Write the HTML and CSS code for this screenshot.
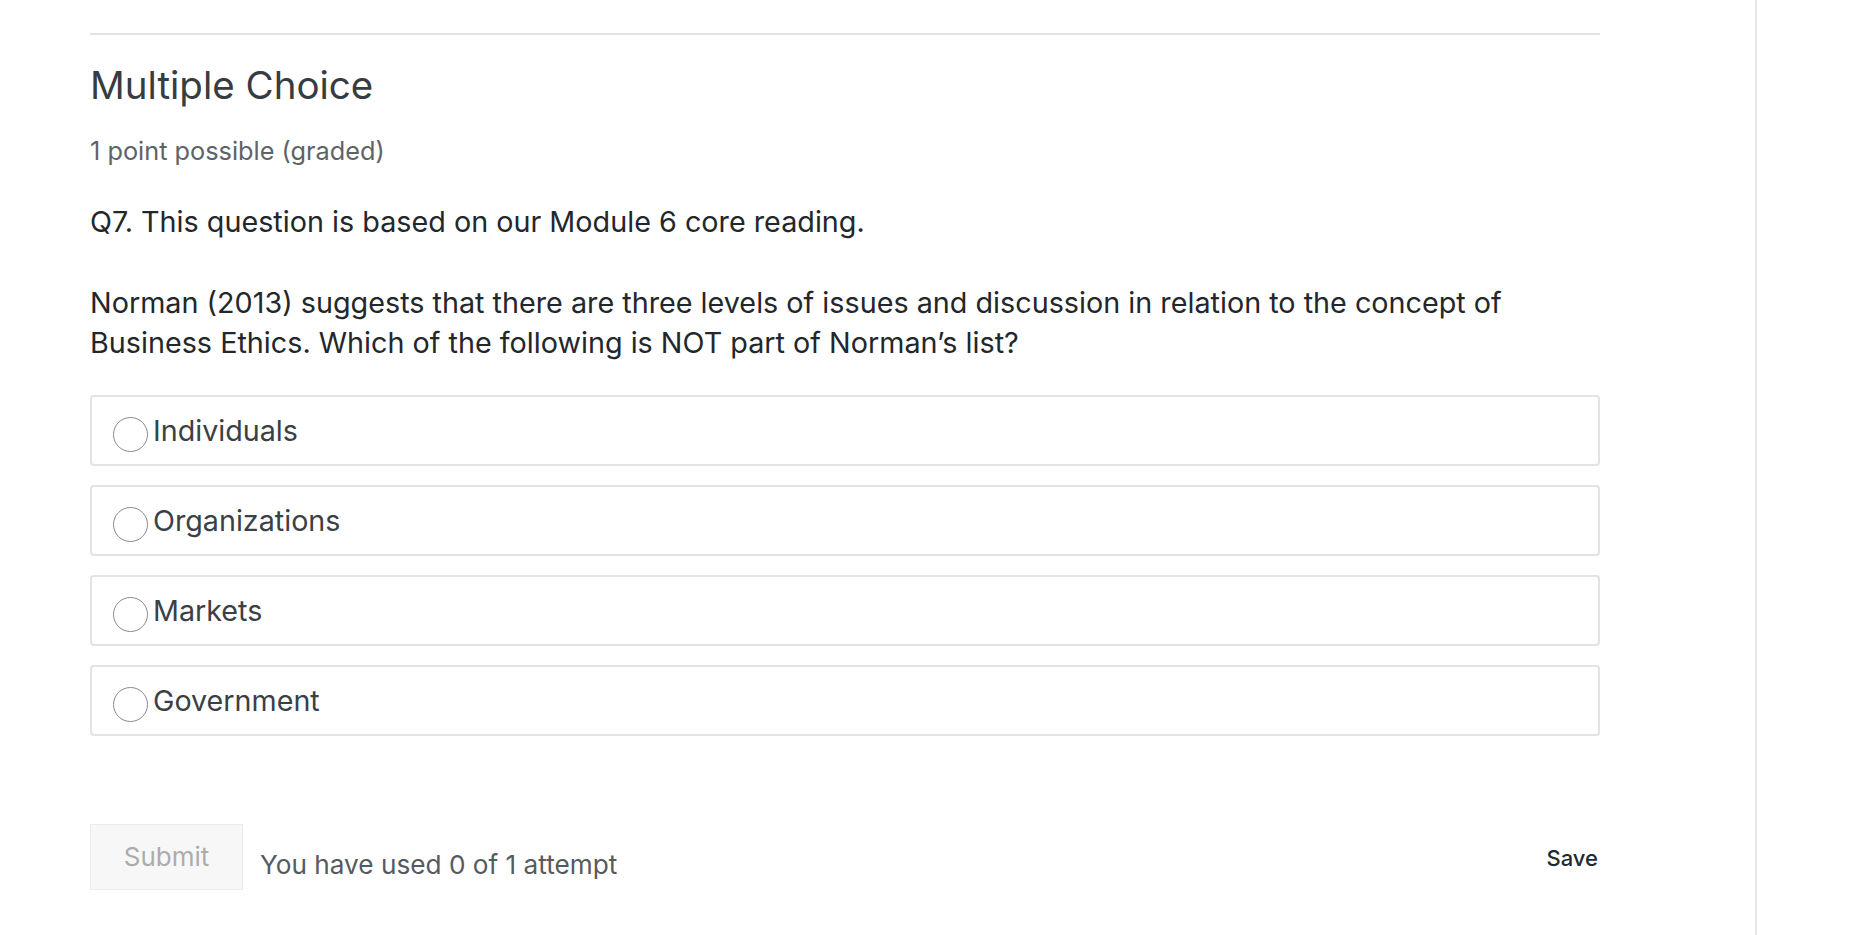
FILE: index.html
```html
<!DOCTYPE html>
<html>
<head>
<meta charset="utf-8">
<link rel="stylesheet" href="styles.css">
</head>
<body>
<div class="page">
  <main class="main">
    <div class="problem">
      <h3 class="title">Multiple Choice</h3>
      <div class="points">1 point possible (graded)</div>
      <p class="q">Q7. This question is based on our Module 6 core reading.</p>
      <p class="q para">Norman (2013) suggests that there are three levels of issues and discussion in relation to the concept of Business Ethics. Which of the following is NOT part of Norman’s list?</p>
      <div class="options">
        <label class="option"><span class="radio"></span><span class="opt-text">Individuals</span></label>
        <label class="option"><span class="radio"></span><span class="opt-text">Organizations</span></label>
        <label class="option"><span class="radio"></span><span class="opt-text">Markets</span></label>
        <label class="option"><span class="radio"></span><span class="opt-text">Government</span></label>
      </div>
      <div class="actions">
        <button class="submit">Submit</button>
        <span class="attempts">You have used 0 of 1 attempt</span>
        <span class="save">Save</span>
      </div>
    </div>
  </main>
</div>
</body>
</html>
```

FILE: styles.css
```css
html, body {
  margin: 0;
  padding: 0;
  background: #fff;
}
body {
  font-family: Inter, "Noto Sans", sans-serif;
  color: #222;
  height: 935px;
  overflow: hidden;
}
.page {
  width: 1755px;
  height: 935px;
  border-right: 2px solid #e6e6e6;
  box-sizing: content-box;
}
.main {
  padding: 33px 0 0 90px;
  width: 1510px;
}
.problem {
  border-top: 2px solid #e2e2e2;
  padding-top: 30px;
}
.title {
  margin: 0;
  font-size: 38.5px;
  line-height: 40px;
  font-weight: 400;
  color: #373c41;
}
.points {
  margin-top: 31px;
  font-size: 25.3px;
  line-height: 30px;
  color: #5e6368;
}
.q {
  margin: 36px 0 0;
  font-size: 28.75px;
  line-height: 40px;
  color: #23272b;
}
.para {
  margin-top: 41px;
}
.options {
  margin-top: 32px;
  display: flex;
  flex-direction: column;
  gap: 19px;
}
.option {
  display: flex;
  align-items: center;
  height: 71px;
  box-sizing: border-box;
  border: 2px solid #e3e3e3;
  border-radius: 4px;
  padding-left: 21px;
}
.radio {
  width: 35px;
  height: 35px;
  box-sizing: border-box;
  border: 1.5px solid #8a8a8a;
  border-radius: 50%;
  margin-top: 8px;
  flex: none;
}
.opt-text {
  margin-left: 5px;
  font-size: 28.7px;
  line-height: 34px;
  color: #3b4045;
}
.actions {
  margin-top: 88px;
  display: flex;
  align-items: center;
}
.submit {
  width: 153px;
  height: 66px;
  background: #f7f7f7;
  border: 1px solid #ececec;
  border-radius: 0;
  font-family: inherit;
  font-size: 26px;
  color: #acacac;
  padding: 0;
  padding-bottom: 1px;
}
.attempts {
  margin-left: 17px;
  margin-top: 14px;
  font-size: 26.2px;
  color: #555a5f;
}
.save {
  margin-left: auto;
  margin-right: 2px;
  margin-top: 2px;
  font-size: 22px;
  font-weight: 500;
  color: #1d2a33;
}
```
